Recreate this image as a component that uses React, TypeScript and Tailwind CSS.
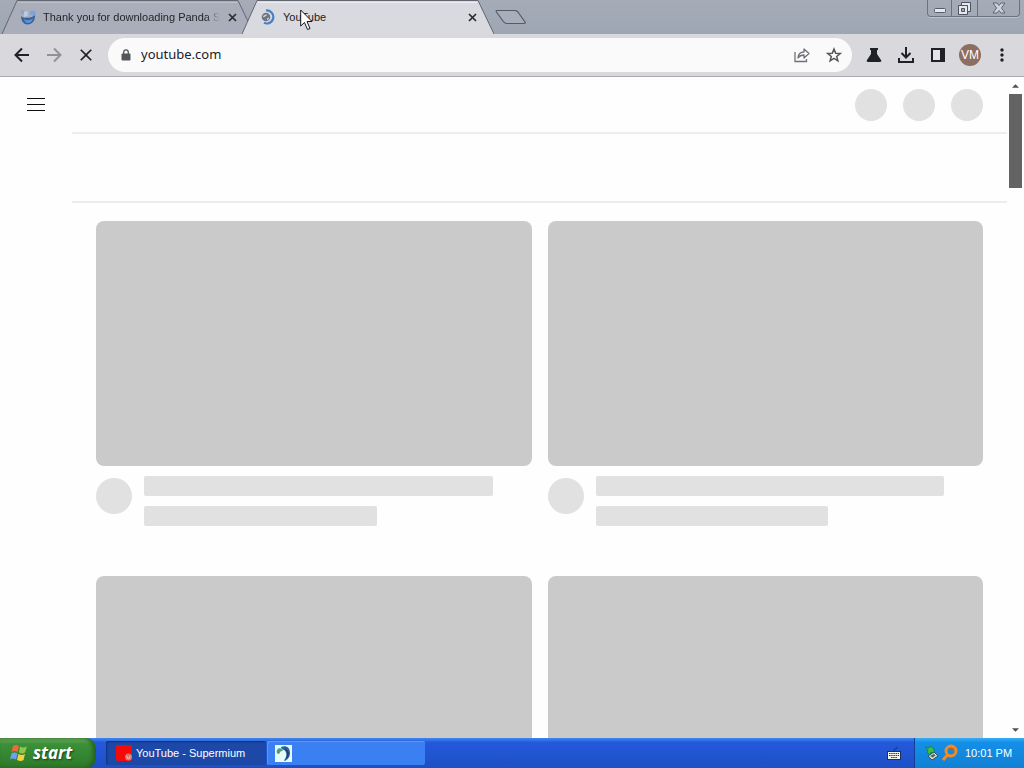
import React from "react";
import { MdClose, MdMoreVert } from "react-icons/md";

function PandaIcon() {
  return (
    <svg width="16" height="16" viewBox="0 0 16 16" aria-hidden="true">
      <circle cx="2.500" cy="3" r="2" fill="#8ea4c4" />
      <path d="M10 3c1-2 4-2 5.500 0 .5 1.500 0 3-1 4l-4-1z" fill="#7fa3d6" />
      <path d="M4 3c1.500-1 3-1 4 0L7.500 7 4 8z" fill="#b9cbe3" />
      <path d="M1 7c1.500 1.500 3 2 5 1.500 3 1 7-.5 9-2.500.5 5-2.500 9.500-7.500 9.500C4 15.500 1 12 1 7z" fill="#35649f" />
      <path d="M4 10c3 2 6 1.500 9-1-.5 3-2.500 5-5 5-2 0-3.500-1.500-4-4z" fill="#5d93d8" />
    </svg>
  );
}

function LoadingIcon() {
  return (
    <svg width="16" height="16" viewBox="0 0 16 16" fill="none" aria-hidden="true">
      <path d="M6 1.500a6.500 6.500 0 1 1-2 12.300" stroke="#4a7fc6" strokeWidth="2.200" />
      <circle cx="6" cy="8" r="4.300" fill="#6d7686" />
      <path d="M3 7.500c1-2 2-.8 3-2.200 1.500.3.600 1.500-.5 2s-1.200 1.500-2.500.2zM7 9.500l2-1c0 1.500-.8 2.500-1.800 2.700z" fill="#d5dae2" />
    </svg>
  );
}

function Tab({ title, icon, active }: { title: string; icon: React.ReactNode; active?: boolean }) {
  return (
    <div className={active ? "relative z-10 -ml-3.5 h-[34px] w-[254px]" : "relative h-[34px] w-[254px]"}>
      <svg className="absolute inset-0" width="254" height="34" viewBox="0 0 254 34" aria-hidden="true">
        <path d="M2 34 17 1H238L254 34z" fill={active ? "#d9dadf" : "#a9aeba"} />
        <path d="M2 34 17 .5H238L254 34" fill="none" stroke="#626772" />
        <path d="M18 2.500H237" stroke={active ? "#ebecf0" : "#bcc1ca"} />
      </svg>
      <div className="relative flex h-full items-center pr-4 pl-5">
        <button role="tab" aria-selected={!!active} className="flex min-w-0 flex-1 items-center gap-[7px] text-left text-[11px] text-[#202126]">
          <span className="shrink-0">{icon}</span>
          <span className={active ? "whitespace-nowrap" : "bg-linear-to-r from-[#202126] from-92% to-transparent bg-clip-text whitespace-nowrap text-transparent"}>{title}</span>
        </button>
        <button aria-label={`Close ${title}`} className="ml-2 flex w-3 justify-center">
          <svg width="9" height="9" viewBox="0 0 9 9" stroke="#2b2c31" strokeWidth="1.700"><path d="M1 1l7 7M8 1 1 8" /></svg>
        </button>
      </div>
    </div>
  );
}

function WindowControls() {
  return (
    <div className="mr-1 ml-auto flex h-[17px] rounded-b border border-t-0 border-[#6b7280] shadow-[0_1px_0_#bcc2cc]">
      <button aria-label="Minimize" className="flex w-6 items-end justify-center border-r border-[#6b7280] pb-[3px]">
        <svg width="12" height="5" viewBox="0 0 12 5"><rect x=".5" y=".5" width="11" height="4" rx="1" fill="#e6e8ed" stroke="#565d6c" /></svg>
      </button>
      <button aria-label="Restore" className="flex w-[26px] items-center justify-center border-r border-[#6b7280]">
        <svg width="13" height="13" viewBox="0 0 13 13" fill="#e6e8ed" stroke="#4d5362">
          <path d="M3.500.5h9v9h-3v-6h-6z" />
          <path fillRule="evenodd" d="M.5 3.500h9v9h-9zM3.500 6.500v3h3v-3z" />
        </svg>
      </button>
      <button aria-label="Close window" className="flex w-[41px] items-center justify-center">
        <svg width="14" height="12" viewBox="0 0 14 12"><path d="M1 1h4l2 2.500L9 1h4L9.500 6l3.500 5H9L7 8.500 5 11H1l3.500-5z" fill="#ced2da" stroke="#5f6675" /></svg>
      </button>
    </div>
  );
}

function ToolButton({ label, children, muted }: { label: string; children: React.ReactNode; muted?: boolean }) {
  return (
    <button aria-label={label} className={muted ? "flex size-8 shrink-0 items-center justify-center text-[#919196]" : "flex size-8 shrink-0 items-center justify-center text-[#202126]"}>
      {children}
    </button>
  );
}

function Toolbar() {
  return (
    <div className="flex h-[43px] shrink-0 items-center gap-1.5 border-b border-[#a9a9b0] bg-[#d9d9dd] px-1.5">
      <div className="flex">
        <ToolButton label="Back">
          <svg width="16" height="16" viewBox="0 0 16 16" fill="none" stroke="currentColor" strokeWidth="2"><path d="M15 8H2.500M8 1.500 1.500 8 8 14.500" /></svg>
        </ToolButton>
        <ToolButton label="Forward" muted>
          <svg width="16" height="16" viewBox="0 0 16 16" fill="none" stroke="currentColor" strokeWidth="2"><path d="M1 8h12.500M8 1.500 14.500 8 8 14.500" /></svg>
        </ToolButton>
        <ToolButton label="Stop loading"><MdClose size={20} /></ToolButton>
      </div>
      <div className="flex h-[34px] min-w-0 flex-1 items-center rounded-full bg-[#fafafb] pr-0.5 pl-[13px]">
        <svg className="shrink-0" width="10" height="12" viewBox="0 0 10 12" aria-hidden="true">
          <path d="M2.700 5V3.200a2.300 2.300 0 0 1 4.600 0V5" fill="none" stroke="#55565a" strokeWidth="1.300" />
          <rect x=".5" y="4.500" width="9" height="7" rx="1" fill="#55565a" />
        </svg>
        <input aria-label="Address" defaultValue="youtube.com" className="ml-2.5 min-w-0 flex-1 bg-transparent text-[13px] text-[#202126] outline-none" />
        <ToolButton label="Share">
          <svg width="16" height="16" viewBox="0 0 16 16" fill="none" stroke="#707176" strokeWidth="1.300">
            <path d="M1 5v9.500h11.500V12" />
            <path d="M4 11c.3-4 2.500-6 6-6V2l5 4.500L10 11V8C7.500 8 5.500 8.800 4 11z" strokeLinejoin="round" />
          </svg>
        </ToolButton>
        <ToolButton label="Bookmark">
          <svg width="16" height="16" viewBox="0 0 16 16" fill="none" stroke="#55565a" strokeWidth="1.500"><path d="M8 2l1.700 4.200 4.500.3-3.500 2.900 1.200 4.400L8 11.400l-3.900 2.400 1.200-4.400-3.500-2.900 4.500-.3z" /></svg>
        </ToolButton>
      </div>
      <div className="flex">
        <ToolButton label="Experiments">
          <svg width="16" height="16" viewBox="0 0 16 16" fill="currentColor"><path d="M4 1h8v2h-1v4l4 6c.7 1.200.2 2-1 2H2c-1.200 0-1.700-.8-1-2l4-6V3H4z" /></svg>
        </ToolButton>
        <ToolButton label="Downloads">
          <svg width="18" height="18" viewBox="0 0 18 18" fill="none" stroke="currentColor" strokeWidth="2"><path d="M9 1v10M4.500 7 9 11.500 13.500 7M2 12v4h14v-4" /></svg>
        </ToolButton>
        <ToolButton label="Side panel">
          <svg width="14" height="14" viewBox="0 0 14 14"><path fill="currentColor" d="M0 0h14v14H0z" /><path fill="#e4e4e7" d="M2 2h7v10H2z" /></svg>
        </ToolButton>
        <ToolButton label="Profile">
          <span className="flex size-[22px] shrink-0 items-center justify-center rounded-full bg-[#8d6e63] font-['Liberation_Sans',sans-serif] text-xs text-white">VM</span>
        </ToolButton>
        <ToolButton label="Menu"><MdMoreVert size={20} /></ToolButton>
      </div>
    </div>
  );
}

function VideoPlaceholder() {
  return (
    <div>
      <div className="aspect-video rounded-lg bg-[#cacaca]" />
      <div className="mt-2.5 flex gap-3">
        <div className="mt-0.5 size-9 shrink-0 rounded-full bg-[#e1e1e1]" />
        <div className="flex flex-1 flex-col gap-2.5">
          <div className="h-5 w-[90%] rounded-xs bg-[#e1e1e1]" />
          <div className="h-5 w-3/5 rounded-xs bg-[#e1e1e1]" />
        </div>
      </div>
    </div>
  );
}

function Scrollbar() {
  return (
    <div className="flex w-[17px] shrink-0 flex-col items-center bg-[#fefefe]">
      <button aria-label="Scroll up" className="flex h-[17px] w-full items-center justify-center">
        <svg width="7" height="4" viewBox="0 0 8 4"><path d="M0 4 4 0l4 4z" fill="#505050" /></svg>
      </button>
      <div className="h-[94px] w-[13px] bg-[#636363]" />
      <button aria-label="Scroll down" className="mt-auto flex h-[17px] w-full items-center justify-center">
        <svg width="7" height="4" viewBox="0 0 8 4"><path d="M0 0h8L4 4z" fill="#505050" /></svg>
      </button>
    </div>
  );
}

function Page() {
  return (
    <div className="flex min-h-0 flex-1 bg-[#fefefe]">
      <div className="w-[72px] shrink-0 pt-[19px] pl-[25px]">
        <button aria-label="Guide" className="block">
          <svg width="22" height="18" viewBox="0 0 22 18" stroke="#0f0f0f"><path d="M2 2.500h18M2 8.500h18M2 14.500h18" /></svg>
        </button>
      </div>
      <main className="min-w-0 flex-1 overflow-hidden">
        <header className="flex h-[57px] items-center justify-end gap-4 border-b-2 border-[#ededed] pr-6">
          <div className="size-8 rounded-full bg-[#e1e1e1]" />
          <div className="size-8 rounded-full bg-[#e1e1e1]" />
          <div className="size-8 rounded-full bg-[#e1e1e1]" />
        </header>
        <div className="h-[69px] border-b-2 border-[#ededed]" />
        <div className="grid grid-cols-2 gap-x-4 gap-y-[50px] px-6 pt-[18px]">
          <VideoPlaceholder />
          <VideoPlaceholder />
          <VideoPlaceholder />
          <VideoPlaceholder />
        </div>
      </main>
      <Scrollbar />
    </div>
  );
}

function Taskbar() {
  return (
    <div className="flex h-[30px] shrink-0 items-stretch bg-linear-to-b from-[#3f86ee] via-[#2459dc] via-15% to-[#1d4fc4] font-['Liberation_Sans',sans-serif] text-[11px] text-white">
      <button className="flex w-24 items-center gap-1 rounded-r-[10px] bg-linear-to-b from-[#6cae62] via-[#3c9038] via-20% to-[#2c7a2a] pl-2.5 font-['Noto_Sans',sans-serif] text-[17px] font-bold italic shadow-[inset_-3px_0_4px_#24601f] [text-shadow:1px_1px_2px_#173f17]">
        <svg width="19" height="18" viewBox="0 0 19 18" aria-hidden="true">
          <path d="M3 2c2-1.500 4-1 6 0L7.500 8c-2-1-4-1.500-6 0z" fill="#ec6a3c" />
          <path d="M10 2.500c2 1 4 1.500 7 0L15 8.500c-2 1.500-4 1-6 0z" fill="#8cc84b" />
          <path d="M1.500 9.500c2-1.500 4-1 6 0L6 15.500c-2-1-4-1.500-6 0z" fill="#6f9ff2" />
          <path d="M8.500 10c2 1 4 1.500 6.500 0l-1.500 6c-2 1.500-4 1-6.500 0z" fill="#f7cf45" />
        </svg>
        start
      </button>
      <div className="flex min-w-0 flex-1 gap-px py-[3px] pl-2.5">
        <button className="flex w-40 items-center gap-[3px] rounded-xs bg-[#1c49a8] pl-2.5 whitespace-nowrap shadow-[inset_1px_1px_2px_#10327c]">
          <svg width="17" height="16" viewBox="0 0 17 16" aria-hidden="true">
            <rect width="16" height="16" rx="2" fill="#f50a0a" />
            <circle cx="12.500" cy="12" r="3.500" fill="#d9776e" />
            <path d="M10.500 11l2 3 2-3" stroke="#f0c0b8" fill="none" />
          </svg>
          YouTube - Supermium
        </button>
        <button aria-label="Setup" className="flex w-[158px] items-center rounded-xs bg-[#3b80f2] pl-2 shadow-[inset_1px_1px_1px_#5c98f6]">
          <svg width="17" height="17" viewBox="0 0 17 17" aria-hidden="true">
            <path d="M0 0h17v17H0z" fill="#e6fbf5" />
            <path d="M6 2c5-2 9 0 9 6 0 4-2 6-5 8-1 0-1-1 0-2 2-3 2-7-1-9-1-1-3-1-3-3z" fill="#2a5f9e" />
            <path d="M2 5c1-2 3-2 5-1 1 1 1 2 0 2-2 0-2 2-3 3C2 9 1 7 2 5z" fill="#4a9c86" />
            <path d="M10 4c3 2 4 5 2 9" stroke="#243c70" strokeWidth="1.500" fill="none" />
          </svg>
        </button>
      </div>
      <button aria-label="Keyboard layout" className="flex w-10 items-center justify-center">
        <svg width="14" height="14" viewBox="0 0 14 14" aria-hidden="true">
          <path d="M7 5C6 2 10 4 10 1" stroke="#15306f" fill="none" />
          <rect x=".5" y="5.500" width="13" height="8" fill="#f4f4ee" stroke="#1d2f60" />
          <path d="M2 7.500h10M2 9.500h10M4 11.500h6" stroke="#27376a" strokeDasharray="1.500 .7" />
        </svg>
      </button>
      <div className="flex w-[110px] items-center border-l border-[#123f96] bg-linear-to-b from-[#35aef5] via-[#148fe8] via-15% to-[#1180d4] pl-2">
        <svg width="18" height="16" viewBox="0 0 18 16" aria-hidden="true">
          <path d="M5 11l6-4 4 4-6 4z" fill="#d3dcdf" stroke="#3c525c" />
          <path d="M7 11l4-2 1.500 1.500-3 2z" fill="#45616e" />
          <path d="M2 2l4 1 1-2 4 3v4l-3-1-1 3-3-3 1-2z" fill="#3fbd45" stroke="#16772b" strokeWidth=".7" />
        </svg>
        <svg width="18" height="18" viewBox="0 0 18 18" fill="none" aria-hidden="true">
          <circle cx="10" cy="7" r="5" stroke="#f58a1f" strokeWidth="3" />
          <path d="M6.500 11 2 16" stroke="#f58a1f" strokeWidth="3" />
          <path d="M9 4.500h3v3" stroke="#c1651c" />
        </svg>
        <time className="ml-1.5 whitespace-nowrap">10:01 PM</time>
      </div>
    </div>
  );
}

export default function App() {
  return (
    <div className="relative flex h-screen flex-col overflow-hidden font-['Noto_Sans','Liberation_Sans',sans-serif]">
      <div className="flex h-[34px] shrink-0 items-start bg-linear-to-b from-[#a5acb8] to-[#9da6b2]">
        <div role="tablist" className="flex font-['Liberation_Sans',sans-serif]">
          <Tab title="Thank you for downloading Panda S" icon={<PandaIcon />} />
          <Tab title="YouTube" icon={<LoadingIcon />} active />
        </div>
        <button aria-label="New tab" className="mt-2.5">
          <svg width="34" height="14" viewBox="0 0 34 14"><path d="M3 .5h18c2 0 3 1 4 3l6 8.500c.5 1 0 1.500-1 1.500H13c-2 0-3-1-4-2.500L2.500 2C2 1 2 .5 3 .5z" fill="#a8afbb" stroke="#555b67" strokeWidth="1.200" /></svg>
        </button>
        <WindowControls />
      </div>
      <Toolbar />
      <Page />
      <Taskbar />
      <svg className="pointer-events-none absolute top-[9px] left-[300px] z-20" width="13" height="22" viewBox="0 0 13 22" aria-hidden="true">
        <path d="M.7 1v16l3.800-3.500 3 7 2.500-1-3-7H12z" fill="#fff" stroke="#15161a" />
      </svg>
    </div>
  );
}
